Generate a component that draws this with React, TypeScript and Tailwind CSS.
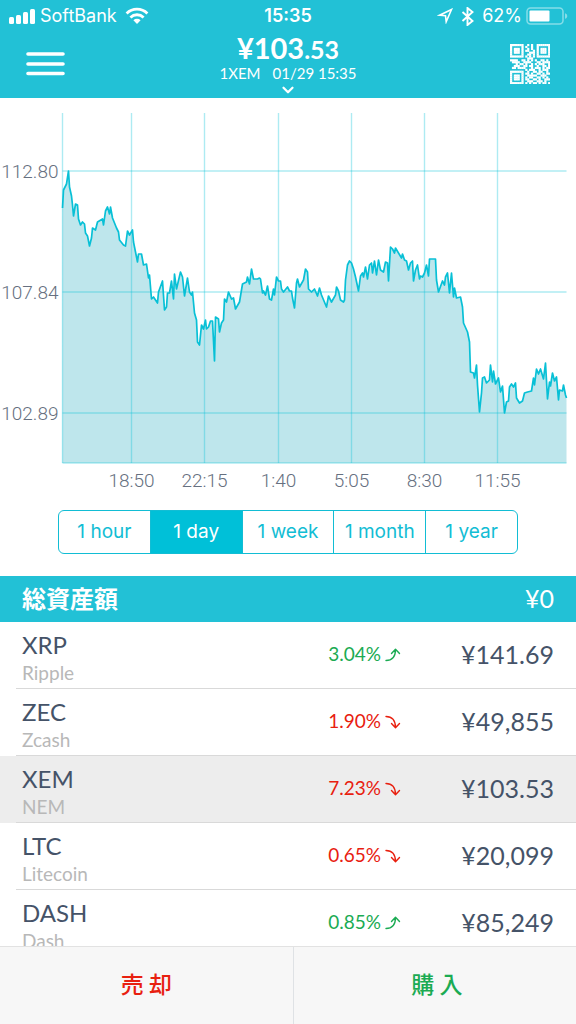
import React from 'react';
import { ChevronDown } from 'lucide-react';

const PRICE_POINTS =
  '0,95 1,77 4,71 6,58 7,74 9,83 10,92 11,103 13,91 15,92 16,106 18,112 20,109 22,111 23,120 25,123 27,133 29,125 30,115 33,117 35,109 40,106 41,112 43,98 45,94 47,101 48,94 50,105 54,115 56,119 57,127 61,132 63,133 65,118 67,122 70,117 71,129 73,139 75,149 76,141 79,141 81,152 84,151 86,165 87,162 89,186 91,184 95,190 96,179 100,168 102,197 104,194 105,180 107,180 109,168 111,186 112,161 114,176 118,159 120,164 122,183 125,165 127,179 129,182 130,179 132,200 134,207 135,229 137,232 139,212 141,216 143,207 144,216 146,214 148,208 150,208 152,248 153,204 156,206 157,219 159,210 161,207 162,186 164,189 166,179 169,186 171,185 173,196 177,189 180,171 184,169 185,164 187,171 189,156 191,166 195,166 197,165 198,166 200,180 201,178 203,182 205,173 207,186 209,187 211,176 212,182 214,164 216,168 218,168 219,176 221,179 225,174 227,178 229,178 230,185 232,195 234,170 235,166 237,174 241,167 243,156 245,159 246,176 249,179 252,176 255,183 257,175 259,182 264,194 266,183 269,189 273,182 274,174 276,178 278,187 281,189 282,187 283,167 285,152 287,148 289,150 291,156 293,164 296,178 298,163 300,160 301,164 303,154 305,166 307,152 309,150 310,160 312,148 314,162 316,147 318,157 321,159 323,149 325,150 326,168 328,134 330,136 332,140 333,135 339,145 340,141 342,147 344,148 346,157 348,150 350,148 351,168 353,157 355,152 357,166 358,163 360,164 362,160 364,152 366,163 367,146 373,146 374,167 376,179 380,168 382,172 383,164 385,160 387,180 389,160 391,184 392,175 394,185 398,184 400,194 401,210 405,219 407,229 408,259 411,260 412,265 414,252 415,272 417,299 419,280 420,265 422,264 424,270 427,267 428,252 430,269 431,258 433,271 436,265 438,279 440,273 442,300 444,289 446,288 447,274 449,271 451,274 453,270 454,285 457,290 460,288 462,280 465,279 469,278 471,265 472,272 474,256 476,261 478,256 481,266 483,250 485,286 487,269 488,273 490,260 492,268 494,264 496,287 497,277 500,278 501,272 503,282 504,285';

const PRICE_TICKS = [
  { label: '112.80', y: 58 },
  { label: '107.84', y: 179 },
  { label: '102.89', y: 300 },
];

const TIME_TICKS = [
  { label: '18:50', x: 69 },
  { label: '22:15', x: 142 },
  { label: '1:40', x: 216 },
  { label: '5:05', x: 289 },
  { label: '8:30', x: 362 },
  { label: '11:55', x: 435 },
];

const QR_ROWS = [
  '#######..#.#..#######',
  '#.....#.#..#..#.....#',
  '#.###.#..#.#..#.###.#',
  '#.###.#.##..#.#.###.#',
  '#.###.#...###.#.###.#',
  '#.....#..##.#.#.....#',
  '#######.#.#.#.#######',
  '.........###.........',
  '####..##.#.#.#..##.#.',
  '.####..####...##.####',
  '...#.##.#..#.#.###..#',
  '..###..##.##..#..##.#',
  '.##.####...#.###.#.##',
  '........#.###..#.###.',
  '#######..#..##.##..#.',
  '#.....#.##.#..##.#.##',
  '#.###.#..#####..###..',
  '#.###.#.#.##..##.#.#.',
  '#.###.#.##..##.#..###',
  '#.....#..###..###.#..',
  '#######.#.#.##.#.##.#',
];

const RANGES = ['1 hour', '1 day', '1 week', '1 month', '1 year'];

interface Coin {
  symbol: string;
  name: string;
  change: string;
  up: boolean;
  price: string;
}

const COINS: Coin[] = [
  { symbol: 'XRP', name: 'Ripple', change: '3.04%', up: true, price: '¥141.69' },
  { symbol: 'ZEC', name: 'Zcash', change: '1.90%', up: false, price: '¥49,855' },
  { symbol: 'XEM', name: 'NEM', change: '7.23%', up: false, price: '¥103.53' },
  { symbol: 'LTC', name: 'Litecoin', change: '0.65%', up: false, price: '¥20,099' },
  { symbol: 'DASH', name: 'Dash', change: '0.85%', up: true, price: '¥85,249' },
];

const StatusBar: React.FC = () => (
  <div className="grid grid-cols-[1fr_auto_1fr] items-center h-8 px-2 font-['Inter',sans-serif] text-lg">
    <div className="flex items-center gap-1">
      <svg width="28" height="17" viewBox="0 0 28 17" fill="currentColor">
        <rect x="1" y="9" width="5" height="7" rx="1.5" />
        <rect x="8" y="7" width="5" height="9" rx="1.5" />
        <rect x="15" y="4" width="5" height="12" rx="1.5" />
        <rect x="22" y="1" width="5" height="15" rx="1.5" />
      </svg>
      <span>SoftBank</span>
      <svg className="ml-1" width="24" height="18" viewBox="0 0 24 18" fill="none" stroke="currentColor" strokeWidth="2.8">
        <path d="M1.6 6.4a15 15 0 0 1 20.8 0" />
        <path d="M5.4 10.4a9.6 9.6 0 0 1 13.2 0" />
        <path d="M12 17l-3.6-3.8a5.2 5.2 0 0 1 7.2 0z" fill="currentColor" stroke="none" />
      </svg>
    </div>
    <span className="font-semibold">15:35</span>
    <div className="flex items-center justify-end gap-1">
      <svg width="16" height="16" viewBox="0 0 16 16" fill="none" stroke="currentColor" strokeWidth="1.6">
        <path d="M14.500 1.500L2.500 7.200l6 .5.700 6z" />
      </svg>
      <svg className="mx-1" width="13" height="19" viewBox="0 0 13 19" fill="none" stroke="currentColor" strokeWidth="1.9">
        <path d="M1.5 5l10 9-5 4V1l5 4-10 9" />
      </svg>
      <span>62%</span>
      <svg width="42" height="18" viewBox="0 0 42 18">
        <rect x="1" y="1" width="36" height="16" rx="3.5" fill="none" stroke="white" strokeOpacity="0.45" strokeWidth="1.5" />
        <rect x="3.5" y="3.5" width="20" height="11" rx="1" fill="white" />
        <path d="M39 6.2c3 .8 3 4.800 0 5.600z" fill="white" fillOpacity="0.45" />
      </svg>
    </div>
  </div>
);

const QrIcon: React.FC = () => (
  <svg width="40" height="40" viewBox="0 0 21 21" fill="currentColor">
    {QR_ROWS.map((row, y) =>
      row.split('').map((cell, x) =>
        cell === '#' ? <rect key={`${x}-${y}`} x={x} y={y} width="1.15" height="1.15" /> : null
      )
    )}
  </svg>
);

const Header: React.FC = () => (
  <header className="shrink-0 bg-[#22c1d6] text-white">
    <StatusBar />
    <div className="grid grid-cols-[1fr_auto_1fr] items-start h-[66px] px-[26px]">
      <button aria-label="Menu" className="justify-self-start mt-5">
        <svg width="39" height="25" viewBox="0 0 39 25" stroke="currentColor" strokeWidth="3.6" strokeLinecap="round">
          <path d="M2 2h35M2 12h35M2 21.500h35" />
        </svg>
      </button>
      <button className="flex flex-col items-center">
        <span className="text-[29px] leading-8 font-bold">
          ¥103<span className="text-[25px]">.53</span>
        </span>
        <span className="flex gap-3 text-[15px] leading-4">
          <span>1XEM</span>
          <span>01/29 15:35</span>
        </span>
        <ChevronDown size={18} strokeWidth={3} />
      </button>
      <button aria-label="QR" className="justify-self-end mt-3">
        <QrIcon />
      </button>
    </div>
  </header>
);

const PriceChart: React.FC = () => (
  <svg viewBox="0 0 576 400" className="w-full shrink-0 font-['Roboto',sans-serif] font-light text-[19px]">
    <g transform="translate(62.5 15)">
      <polygon points={`0,350 ${PRICE_POINTS} 504,350`} fill="#bee6ec" />
      <g stroke="#00c0d8" strokeOpacity="0.32" strokeWidth="1.4">
        <line x1="0" y1="0" x2="0" y2="350" />
        <line x1="0" y1="350" x2="504" y2="350" />
        {TIME_TICKS.map((t) => (
          <line key={t.label} x1={t.x} y1="0" x2={t.x} y2="350" />
        ))}
        {PRICE_TICKS.map((t) => (
          <line key={t.label} x1="0" y1={t.y} x2="504" y2={t.y} />
        ))}
      </g>
      <polyline points={PRICE_POINTS} fill="none" stroke="#08c0d6" strokeWidth="1.7" strokeLinejoin="round" />
      <g fill="#667080">
        {PRICE_TICKS.map((t) => (
          <text key={t.label} x="-4" y={t.y + 7} textAnchor="end">
            {t.label}
          </text>
        ))}
        {TIME_TICKS.map((t) => (
          <text key={t.label} x={t.x} y="374" textAnchor="middle">
            {t.label}
          </text>
        ))}
      </g>
    </g>
  </svg>
);

const TrendArrow: React.FC<{ up: boolean }> = ({ up }) => (
  <svg width="16" height="16" viewBox="0 0 16 16" fill="none" stroke="currentColor" strokeWidth="1.4" strokeLinecap="round" strokeLinejoin="round">
    {up ? (
      <path d="M1 13.500C7 13.500 10.500 10 10.500 2.500M6.500 6.500l4-4.300 4 4.300" />
    ) : (
      <path d="M1 2.500c6 0 9.500 3.500 9.500 11M6.500 9.500l4 4.300 4-4.300" />
    )}
  </svg>
);

interface CoinRowProps {
  coin: Coin;
  selected: boolean;
  onSelect: () => void;
}

const CoinRow: React.FC<CoinRowProps> = ({ coin, selected, onSelect }) => (
  <li className={selected ? 'bg-[#ededed]' : 'bg-white'}>
    <button
      onClick={onSelect}
      className="flex items-center w-full h-[67px] pb-0.5 px-[22px] text-left text-[#455368]"
    >
      <span className="flex-1 flex flex-col pt-1">
        <span className="text-2xl leading-8">{coin.symbol}</span>
        <span className="text-[19px] leading-6 text-[#b8b8b8]">{coin.name}</span>
      </span>
      <span className={`flex items-center gap-1 text-[19px] ${coin.up ? 'text-[#1bab53]' : 'text-[#e8200f]'}`}>
        {coin.change}
        <TrendArrow up={coin.up} />
      </span>
      <span className="w-[153px] text-right text-[25px]">{coin.price}</span>
    </button>
    <hr className="ml-4 -mt-px border-t border-[#d9d9d9]" />
  </li>
);

export default function App() {
  const [range, setRange] = React.useState('1 day');
  const [selected, setSelected] = React.useState('XEM');

  return (
    <div className="flex flex-col h-screen overflow-hidden bg-white font-['Lato','Noto_Sans_CJK_JP',sans-serif]">
      <Header />

      <main className="flex-1 min-h-0 flex flex-col overflow-hidden">
        <PriceChart />

        {/* Range switch */}
        <div className="flex shrink-0 h-11 mt-3 mb-[22px] mx-[58px] border border-[#12bdd4] rounded-md overflow-hidden font-['Inter',sans-serif] text-[19px]">
          {RANGES.map((r) => (
            <button
              key={r}
              onClick={() => setRange(r)}
              className={`flex-1 basis-0 whitespace-nowrap border-[#12bdd4] not-first:border-l ${
                r === range ? 'bg-[#00c0d8] text-white' : 'text-[#12bdd4]'
              }`}
            >
              {r}
            </button>
          ))}
        </div>

        {/* Total assets */}
        <div className="flex shrink-0 items-center justify-between h-[46px] px-[22px] bg-[#22c1d6] text-white">
          <h2 className="text-2xl font-bold">総資産額</h2>
          <span className="text-[25px]">¥0</span>
        </div>

        <ul className="flex-1 min-h-0 overflow-y-auto [scrollbar-width:none]">
          {COINS.map((coin) => (
            <CoinRow
              key={coin.symbol}
              coin={coin}
              selected={coin.symbol === selected}
              onSelect={() => setSelected(coin.symbol)}
            />
          ))}
        </ul>
      </main>

      <footer className="flex shrink-0 h-[78px] border-t border-[#e2e2e2] bg-[#f7f7f7] text-[23px] font-medium font-['Noto_Sans_CJK_JP',sans-serif]">
        <button className="w-[51%] pb-1 border-r border-[#dfe2e5] text-[#e8200f]">売 却</button>
        <button className="flex-1 pb-1 pl-1 text-[#1bab53]">購 入</button>
      </footer>
    </div>
  );
}
